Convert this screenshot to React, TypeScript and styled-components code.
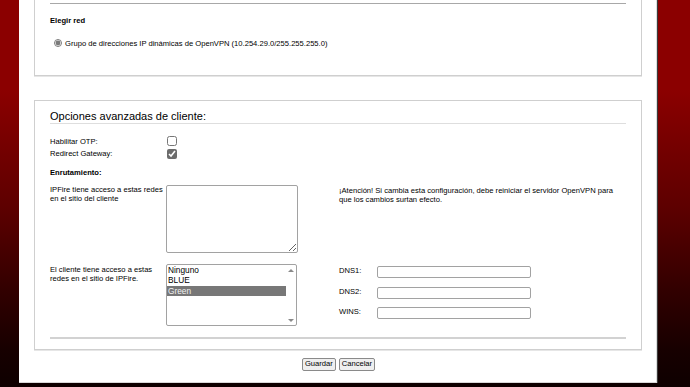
import React from "react";
import styled, { createGlobalStyle } from "styled-components";

const GlobalStyle = createGlobalStyle`
  html, body {
    margin: 0;
    padding: 0;
  }
  body {
    min-height: 100vh;
    background: linear-gradient(
      180deg,
      #8b0000 0px,
      #8b0000 90px,
      #5c0000 210px,
      #320000 290px,
      #170000 350px,
      #0e0000 387px
    );
    font-family: "Liberation Sans", Arial, sans-serif;
    color: #000;
  }
`;

const Page = styled.div`
  box-sizing: border-box;
  margin-left: 19px;
  width: 638px;
  height: 383px;
  background: #fff;
  border-right: 1px solid #dcdcdc;
  border-bottom: 1px solid #d8d8d8;
  box-shadow: 1px 0 0 #3a3a3a;
  padding: 0 14px 0 15px;
  display: flex;
  flex-direction: column;
  font-size: 7.6px;
  line-height: 9px;
  color: #000;
`;

const Box = styled.section<{ $open?: boolean }>`
  box-sizing: border-box;
  border: 1px solid #cfcfcf;
  border-top: ${(p) => (p.$open ? "none" : "1px solid #cfcfcf")};
  box-shadow: 0 1px 0 #e6e6e6;
  padding: 0 15px 0 15px;
  display: flex;
  flex-direction: column;
`;

const NetBox = styled(Box)`
  height: 76px;
`;

const ClientBox = styled(Box)`
  margin-top: 24px;
  padding-top: 9px;
  padding-bottom: 10px;
`;

const Rule = styled.div<{ $thick?: boolean; $tone?: string }>`
  height: ${(p) => (p.$thick ? "2px" : "1px")};
  background: ${(p) => p.$tone || "#a8a8a8"};
`;

const TopRule = styled(Rule)`
  margin-top: 3px;
`;

const SubHeading = styled.div<{ $top: number }>`
  margin-top: ${(p) => p.$top}px;
  font-weight: bold;
  line-height: 9px;
`;

const RadioRow = styled.label`
  margin-top: 13px;
  display: flex;
  align-items: center;
  gap: 3px;
  height: 10px;
`;

const Radio = styled.input`
  margin: 0 0 0 4px;
  width: 8px;
  height: 8px;
  accent-color: #7a7a7a;
`;

const Title = styled.h2`
  margin: 0;
  font-size: 11px;
  line-height: 13px;
  font-weight: normal;
  color: #000;
  border-bottom: 1px solid #dedede;
`;

const OptionList = styled.div`
  margin-top: 11px;
  display: flex;
  flex-direction: column;
`;

const OptionRow = styled.label`
  display: grid;
  grid-template-columns: 116px auto;
  align-items: center;
  height: 12.5px;
`;

const Check = styled.input`
  margin: 0 0 0 1px;
  width: 10px;
  height: 10px;
  accent-color: #6c6c6c;
`;

const RoutingGrid = styled.div`
  margin-top: 8.5px;
  display: grid;
  grid-template-columns: 116px 173px 1fr;
  row-gap: 11px;
  align-items: start;
`;

const Label = styled.div<{ $nudge?: number }>`
  line-height: 9px;
  padding-top: ${(p) => p.$nudge || 0}px;
`;

const Warning = styled.div`
  line-height: 9px;
  padding-top: 1px;
`;

const Area = styled.textarea`
  box-sizing: border-box;
  display: block;
  width: 132px;
  height: 68px;
  border: 1px solid #a2a2a2;
  border-radius: 2px;
  margin: 0;
  padding: 2px;
  font: inherit;
`;

const ListBox = styled.div`
  box-sizing: border-box;
  width: 131px;
  height: 62px;
  border: 1px solid #a2a2a2;
  border-radius: 2px;
  display: grid;
  grid-template-columns: 1fr 10px;
`;

const Items = styled.ul`
  list-style: none;
  margin: 0;
  padding: 0;
  font-size: 8.3px;
  line-height: 10.3px;
  color: #000;
`;

const Item = styled.li<{ $selected?: boolean }>`
  padding-left: 1px;
  background: ${(p) => (p.$selected ? "#777" : "transparent")};
  color: ${(p) => (p.$selected ? "#f2f2f2" : "#000")};
`;

const ScrollTrack = styled.div`
  display: flex;
  flex-direction: column;
  justify-content: space-between;
  align-items: center;
  padding: 4px 0 3px;
`;

const Arrow = styled.div<{ $down?: boolean }>`
  width: 0;
  height: 0;
  border-left: 3px solid transparent;
  border-right: 3px solid transparent;
  ${(p) =>
    p.$down
      ? "border-top: 3.5px solid #8a8a8a;"
      : "border-bottom: 3.5px solid #8a8a8a;"}
`;

const DnsGroup = styled.div`
  margin-top: 2px;
  display: flex;
  flex-direction: column;
  gap: 8.7px;
`;

const DnsRow = styled.label`
  display: grid;
  grid-template-columns: 37.5px 154px;
  align-items: center;
  height: 12px;
`;

const DnsLabel = styled.span`
  margin-top: -3px;
`;

const TextInput = styled.input`
  box-sizing: border-box;
  width: 154px;
  height: 12px;
  margin: 0;
  padding: 0 2px;
  border: 1px solid #a2a2a2;
  border-radius: 2px;
  font: inherit;
`;

const BottomRule = styled(Rule)`
  margin-top: 11px;
`;

const Actions = styled.div`
  margin-top: 8px;
  display: flex;
  justify-content: center;
  gap: 3px;
  padding-left: 1px;
`;

const Button = styled.button`
  box-sizing: border-box;
  height: 12.5px;
  padding: 0 2px;
  margin: 0;
  font-family: "Liberation Sans", Arial, sans-serif;
  font-size: 7.6px;
  line-height: 10px;
  color: #000;
  background: #efefef;
  border: 1px solid #8a8a8a;
  border-radius: 2px;
`;

export default function App() {
  return (
    <>
      <GlobalStyle />
      <Page>
        <NetBox $open>
          <TopRule $tone="#a8a8a8" />
          <SubHeading $top={12}>Elegir red</SubHeading>
          <RadioRow>
            <Radio type="radio" name="net" defaultChecked />
            <span>
              Grupo de direcciones IP dinámicas de OpenVPN
              (10.254.29.0/255.255.255.0)
            </span>
          </RadioRow>
        </NetBox>

        <ClientBox>
          <Title>Opciones avanzadas de cliente:</Title>
          <OptionList>
            <OptionRow>
              <span>Habilitar OTP:</span>
              <Check type="checkbox" />
            </OptionRow>
            <OptionRow>
              <span>Redirect Gateway:</span>
              <Check type="checkbox" defaultChecked />
            </OptionRow>
          </OptionList>
          <SubHeading $top={7.5}>Enrutamiento:</SubHeading>
          <RoutingGrid>
            <Label>
              IPFire tiene acceso a estas redes
              <br />
              en el sitio del cliente
            </Label>
            <Area />
            <Warning>
              ¡Atención! Si cambia esta configuración, debe reiniciar el
              servidor OpenVPN para
              <br />
              que los cambios surtan efecto.
            </Warning>

            <Label $nudge={1}>
              El cliente tiene acceso a estas
              <br />
              redes en el sitio de IPFire.
            </Label>
            <ListBox role="listbox">
              <Items>
                <Item>Ninguno</Item>
                <Item>BLUE</Item>
                <Item $selected>Green</Item>
              </Items>
              <ScrollTrack>
                <Arrow />
                <Arrow $down />
              </ScrollTrack>
            </ListBox>
            <DnsGroup>
              <DnsRow>
                <DnsLabel>DNS1:</DnsLabel>
                <TextInput type="text" />
              </DnsRow>
              <DnsRow>
                <DnsLabel>DNS2:</DnsLabel>
                <TextInput type="text" />
              </DnsRow>
              <DnsRow>
                <DnsLabel>WINS:</DnsLabel>
                <TextInput type="text" />
              </DnsRow>
            </DnsGroup>
          </RoutingGrid>
          <BottomRule $thick $tone="#d2d2d2" />
        </ClientBox>

        <Actions>
          <Button type="button">Guardar</Button>
          <Button type="button">Cancelar</Button>
        </Actions>
      </Page>
    </>
  );
}
